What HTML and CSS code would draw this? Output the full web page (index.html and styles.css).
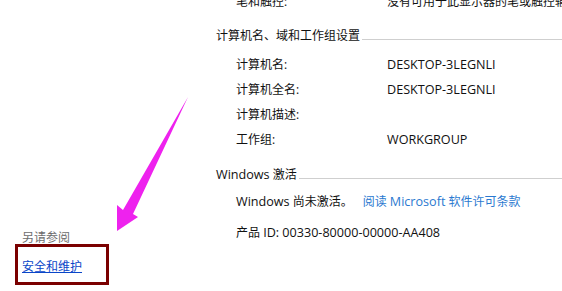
FILE: index.html
```html
<!DOCTYPE html>
<html lang="zh-CN">
<head>
<meta charset="utf-8">
<title>系统</title>
<link rel="stylesheet" href="styles.css">
</head>
<body>
<div class="page">
  <aside class="sidebar">
    <div class="see-also">另请参阅</div>
    <a class="side-link" href="#">安全和维护</a>
  </aside>
  <main class="content">
    <div class="row"><span class="label">笔和触控:</span><span class="value">没有可用于此显示器的笔或触控输入</span></div>

    <div class="section-title"><span>计算机名、域和工作组设置</span></div>
    <div class="group">
      <div class="row"><span class="label">计算机名:</span><span class="value lat">DESKTOP-3LEGNLI</span></div>
      <div class="row"><span class="label">计算机全名:</span><span class="value lat">DESKTOP-3LEGNLI</span></div>
      <div class="row"><span class="label">计算机描述:</span><span class="value"></span></div>
      <div class="row"><span class="label">工作组:</span><span class="value lat">WORKGROUP</span></div>
    </div>

    <div class="section-title second"><span><span class="lat">Windows</span> 激活</span></div>
    <div class="group activation">
      <div class="row act-row"><span><span class="lat">Windows</span> 尚未激活。</span><a class="content-link" href="#">阅读 <span class="lat">Microsoft</span> 软件许可条款</a></div>
      <div class="row"><span>产品 <span class="lat">ID: 00330-80000-00000-AA408</span></span></div>
    </div>
  </main>

  <svg class="arrow" width="80" height="140" viewBox="110 95 80 140" aria-hidden="true">
    <polygon points="188,97 133,214 138,217 117,231 117,205 123,210" fill="#ee22ee"/>
  </svg>
  <div class="highlight-box"></div>
</div>
</body>
</html>
```
FILE: styles.css
```css
html, body {
  margin: 0;
  padding: 0;
  background: #ffffff;
}
body {
  width: 562px;
  height: 291px;
  overflow: hidden;
  font-family: "Open Sans", "Noto Sans CJK SC", sans-serif;
  font-size: 12px;
  color: #111111;
}
.page {
  position: relative;
  display: flex;
  width: 562px;
  height: 291px;
}
.sidebar {
  flex: none;
  width: 194px;
  padding-left: 22px;
  padding-top: 226px;
  display: flex;
  flex-direction: column;
  align-items: flex-start;
}
.see-also {
  line-height: 24px;
  color: #6d6d6d;
}
.side-link {
  margin-top: 5px;
  line-height: 24px;
  color: #0a46c8;
  text-decoration: underline;
}
.content {
  flex: 1;
  min-width: 0;
  margin-top: -11px;
}
.lat {
  font-size: 12.6px;
}
.row {
  display: flex;
  height: 25px;
  line-height: 25px;
  padding-left: 20px;
  white-space: nowrap;
}
.label {
  width: 151px;
  flex: none;
}
.section-title {
  display: flex;
  align-items: center;
  height: 24px;
  line-height: 24px;
  margin-top: 10px;
  white-space: nowrap;
}
.section-title::after {
  content: "";
  flex: 1;
  height: 1px;
  background: #cfcfcf;
  margin-left: 2px;
  margin-top: 6px;
}
.section-title.second {
  margin-top: 11px;
}
.group {
  margin-top: 4px;
}
.activation {
  margin-top: 3px;
}
.act-row {
  height: 30px;
  line-height: 24px;
}
.content-link {
  margin-left: 10px;
  color: #2b79d0;
  text-decoration: none;
}
.arrow {
  position: absolute;
  left: 110px;
  top: 95px;
}
.highlight-box {
  position: absolute;
  left: 15px;
  top: 244px;
  width: 88px;
  height: 35px;
  border: 3px solid #7a0000;
}
```
